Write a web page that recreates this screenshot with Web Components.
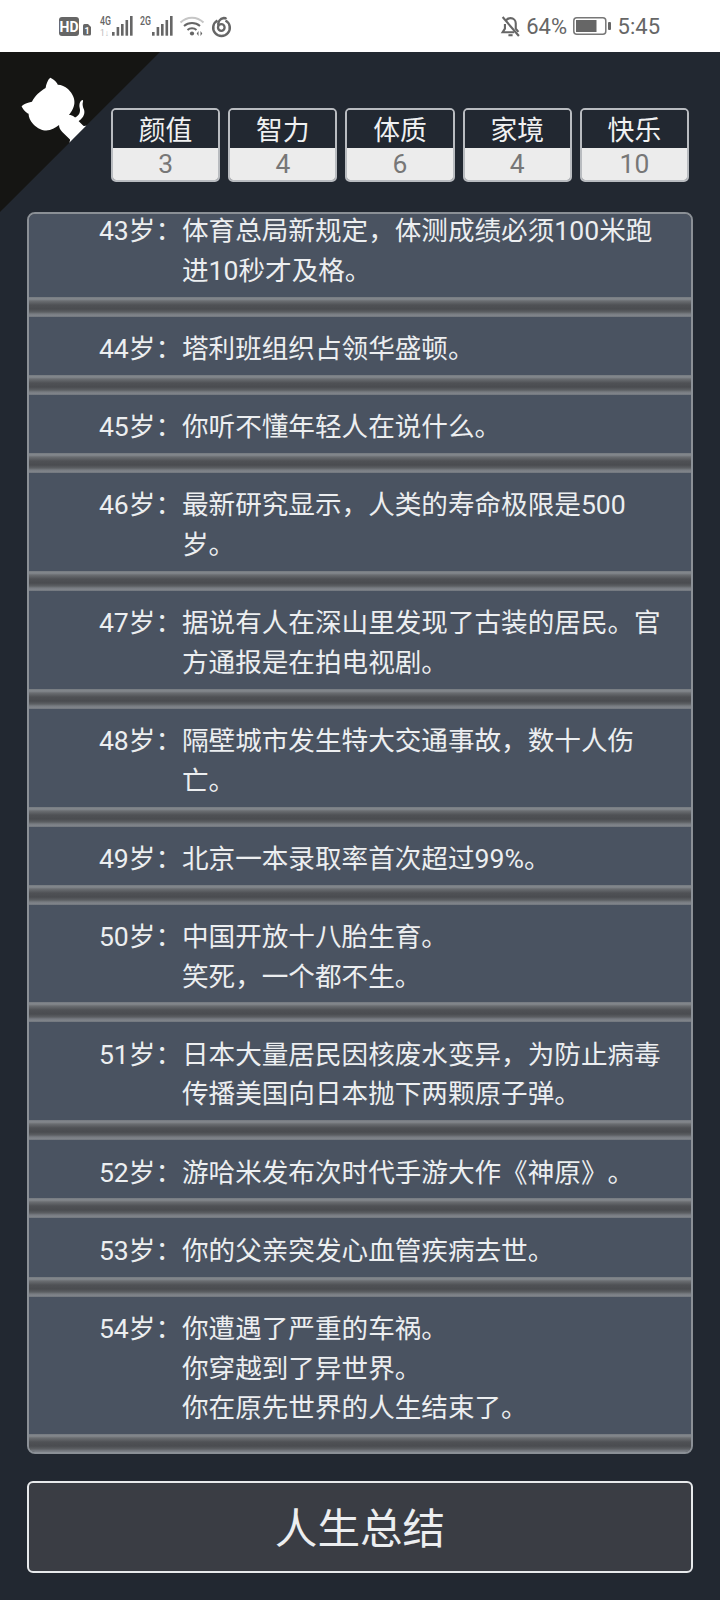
<!DOCTYPE html>
<html lang="zh-CN"><head><meta charset="utf-8"><title>人生重开</title>
<style>
html,body{margin:0;padding:0;background:#222831}
body{font-family:Roboto,"Noto Sans CJK SC",sans-serif;width:720px;height:1600px;overflow:hidden}
</style></head><body>
<game-page>
  <status-bar></status-bar>
  <corner-ribbon></corner-ribbon>
  <stat-row>
    <stat-box value="3">颜值</stat-box>
    <stat-box value="4">智力</stat-box>
    <stat-box value="6">体质</stat-box>
    <stat-box value="4">家境</stat-box>
    <stat-box value="10">快乐</stat-box>
  </stat-row>
  <life-list>
    <life-item age="43岁：">体育总局新规定，体测成绩必须100米跑进10秒才及格。</life-item>
    <life-item age="44岁：">塔利班组织占领华盛顿。</life-item>
    <life-item age="45岁：">你听不懂年轻人在说什么。</life-item>
    <life-item age="46岁：">最新研究显示，人类的寿命极限是500岁。</life-item>
    <life-item age="47岁：">据说有人在深山里发现了古装的居民。官方通报是在拍电视剧。</life-item>
    <life-item age="48岁：">隔壁城市发生特大交通事故，数十人伤亡。</life-item>
    <life-item age="49岁：">北京一本录取率首次超过99%。</life-item>
    <life-item age="50岁：">中国开放十八胎生育。<br>笑死，一个都不生。</life-item>
    <life-item age="51岁：">日本大量居民因核废水变异，为防止病毒传播美国向日本抛下两颗原子弹。</life-item>
    <life-item age="52岁：">游哈米发布次时代手游大作《神原》。</life-item>
    <life-item age="53岁：">你的父亲突发心血管疾病去世。</life-item>
    <life-item age="54岁：">你遭遇了严重的车祸。<br>你穿越到了异世界。<br>你在原先世界的人生结束了。</life-item>
  </life-list>
  <action-button>人生总结</action-button>
</game-page>
<script>
function def(name, html, setup){
  customElements.define(name, class extends HTMLElement{
    constructor(){super();this.attachShadow({mode:'open'}).innerHTML=html;}
    connectedCallback(){ if(setup) setup(this); }
  });
}
def('game-page',`<style>
:host{display:flex;flex-direction:column;position:relative;width:720px;height:1600px;background:#222831;overflow:hidden;color:#eef0f2}
</style><slot></slot>`);

def('status-bar',`<style>
:host{display:flex;align-items:center;justify-content:space-between;height:52px;background:#fff;color:#666;padding:0 60px 0 59px;box-sizing:border-box;font-family:Roboto,sans-serif;font-size:22px;flex:none}
.g{display:flex;align-items:center}
svg{display:block}
.pct{margin:0 6px 0 5.5px}
.clock{margin-left:6.5px}
text{font-family:Roboto,sans-serif}
</style>
<div class="g">
<svg width="175" height="52" viewBox="0 0 175 52">
 <rect x="0" y="17" width="20" height="19" rx="3" fill="#666"/>
 <text x="10" y="31.500" font-size="14" font-weight="700" fill="#fff" text-anchor="middle">HD</text>
 <path d="M24 25.500q0-1.500 1.500-1.500h3.500l3 3v7q0 1.500-1.500 1.500h-5q-1.500 0-1.500-1.500z" fill="#666"/>
 <text x="28" y="34" font-size="9" font-weight="700" fill="#fff" text-anchor="middle">1</text>
 <text x="41" y="25" font-size="12.500" font-weight="500" fill="#666" textLength="11" lengthAdjust="spacingAndGlyphs">4G</text>
 <text x="41" y="35.500" font-size="8.500" fill="#bbb">1↓</text>
 <g fill="#666">
  <rect x="53" y="32" width="2.600" height="3.700"/><rect x="57.600" y="27" width="2.600" height="8.700"/><rect x="62" y="24" width="2.600" height="11.700"/><rect x="66.500" y="20" width="2.600" height="15.700"/><rect x="71" y="16" width="2.600" height="19.700"/>
  <rect x="93" y="32" width="2.600" height="3.700"/><rect x="97.600" y="27" width="2.600" height="8.700"/><rect x="102" y="24" width="2.600" height="11.700"/><rect x="106.500" y="20" width="2.600" height="15.700"/><rect x="111" y="16" width="2.600" height="19.700"/>
 </g>
 <text x="81" y="25" font-size="12.500" font-weight="500" fill="#666" textLength="11" lengthAdjust="spacingAndGlyphs">2G</text>
 <path d="M121.500 22.500c6.500-6.500 16.500-6.500 23 0" fill="none" stroke="#c6c6c6" stroke-width="2"/>
 <path d="M125 26c4.500-4 11.500-4 16 0" fill="none" stroke="#666" stroke-width="2"/>
 <path d="M128.500 30c2.500-2.200 6.500-2.200 9 0" fill="none" stroke="#666" stroke-width="2"/>
 <circle cx="133" cy="33.500" r="2.100" fill="#666"/>
 <path d="M139.500 31v5l-1.800-2.500zM141.500 31v5l1.800-2.500z" fill="#666"/>
 <path d="M158.500 20.500a8.300 8.300 0 1 0 8 0" fill="none" stroke="#666" stroke-width="2.500"/>
 <circle cx="162.300" cy="27.500" r="3.300" fill="none" stroke="#666" stroke-width="2.300"/>
 <path d="M159.300 25.500c-.5-3.500 1.500-7 5.500-7.500 1 0 2 .3 2.500 1" fill="none" stroke="#666" stroke-width="2.300"/>
</svg>
</div>
<div class="g">
<svg width="21" height="21" viewBox="0 0 20 20" fill="none" stroke="#666" stroke-width="2">
 <path d="M5.500 4.500C6.500 3 8 2 10 2c3 0 5 2.200 5 5v5l2.500 3.200"/>
 <path d="M4.700 7.500v4.500L2.500 15.500h11"/>
 <path d="M8 18.300h4"/>
 <path d="M2.500 1l15.500 18"/>
</svg>
<span class="pct">64%</span>
<svg width="38" height="18" viewBox="0 0 38 18">
 <rect x=".8" y=".8" width="32" height="16.400" rx="3" fill="none" stroke="#777" stroke-width="1.500"/>
 <rect x="3" y="3" width="20.500" height="12" fill="#666"/>
 <rect x="35" y="5" width="3" height="8" rx="1" fill="#666"/>
</svg>
<span class="clock">5:45</span>
</div>`);

def('corner-ribbon',`<style>
:host{display:block;position:absolute;left:0;top:52px;width:160px;height:160px;color:#fff}
svg{display:block;transform:scaleX(-1)}
</style>
<svg width="160" height="160" viewBox="0 0 250 250">
<path fill="#151513" d="M0,0 L115,115 L130,115 L142,142 L250,250 L250,0 Z"/>
<path fill="#fff" d="M128.3,109.0 C113.8,99.7 119.0,89.6 119.0,89.6 C122.0,82.7 120.5,78.6 120.5,78.6 C119.2,72.0 123.4,76.3 123.4,76.3 C127.3,80.9 125.5,87.3 125.5,87.3 C122.9,97.6 130.6,101.9 134.4,103.2"/>
<path fill="#fff" d="M115.0,115.0 C114.9,115.1 118.7,116.5 119.8,115.4 L133.7,101.6 C136.9,99.2 139.9,98.4 142.2,98.6 C133.8,88.0 127.5,74.4 143.8,58.0 C148.5,53.4 154.0,51.2 159.7,51.0 C160.3,49.4 163.2,43.6 171.4,40.1 C171.4,40.1 176.1,42.5 178.8,56.2 C183.1,58.6 187.2,61.8 190.9,65.4 C194.5,69.0 197.7,73.2 200.1,77.6 C213.8,80.2 216.3,84.9 216.3,84.9 C212.7,93.1 206.9,96.0 205.4,96.6 C205.1,102.4 203.0,107.8 198.3,112.5 C181.9,128.9 168.3,122.5 157.7,114.1 C157.9,116.9 156.7,120.9 152.7,124.9 L141.0,136.5 C139.8,137.7 141.6,141.9 141.8,141.8 Z"/>
</svg>`);

def('stat-row',`<style>
:host{display:flex;gap:8px;margin:56px 31px 0 111px;flex:none;height:74px}
</style><slot></slot>`);

def('stat-box',`<style>
:host{display:flex;flex-direction:column;flex:1 1 0;box-sizing:border-box;border:2px solid #b9bcc0;border-radius:5px;overflow:hidden;font-family:Roboto,"Noto Sans CJK SC",sans-serif;font-size:26.4px;text-align:center}
.l{height:38px;line-height:42px;font-size:26.800px;background:#222831;color:#f0f1f2}
.v{flex:1;line-height:32px;background:#ececec;color:#777}
</style><div class="l"><slot></slot></div><div class="v" id="v"></div>`,
el=>{el.shadowRoot.getElementById('v').textContent=el.getAttribute('value');});

def('life-list',`<style>
:host{display:block;flex:none;box-sizing:border-box;height:1242px;margin:30px 27px 0;border:2px solid #8b9096;border-radius:8px;overflow:hidden;background:#4a4c50}
.in{display:flex;flex-direction:column;margin-top:-15px}
</style><div class="in"><slot></slot></div>`);

def('life-item',`<style>
:host{display:block;flex:none;font-family:Roboto,"Noto Sans CJK SC",sans-serif;font-size:26.600px;line-height:39.600px;color:#eceef0;text-spacing-trim:space-all}
.row{display:grid;grid-template-columns:153px 490px;padding:12.300px 0 6.300px;background:#4a5361}
.age{text-align:right;white-space:nowrap}
.sep{height:20px;background:linear-gradient(to bottom,#757a80 0,#85898e 2px,#6a6d71 4px,#4f5155 8px,#4a4c50 12px,#5c5f63 15px,#787c82 17px,#81858b 19px,#6a7078 20px)}
</style><div class="row"><div class="age" id="a"></div><div class="txt"><slot></slot></div></div><div class="sep"></div>`,
el=>{el.shadowRoot.getElementById('a').textContent=el.getAttribute('age');});

def('action-button',`<style>
:host{display:flex;align-items:center;justify-content:center;flex:none;box-sizing:border-box;height:92px;margin:27px 27px 0;padding-bottom:3px;border:2px solid #e8eaec;border-radius:6px;background:#3a3d44;color:#eceef0;font-family:Roboto,"Noto Sans CJK SC",sans-serif;font-size:42.600px}
</style><slot></slot>`);
</script>
</body></html>
